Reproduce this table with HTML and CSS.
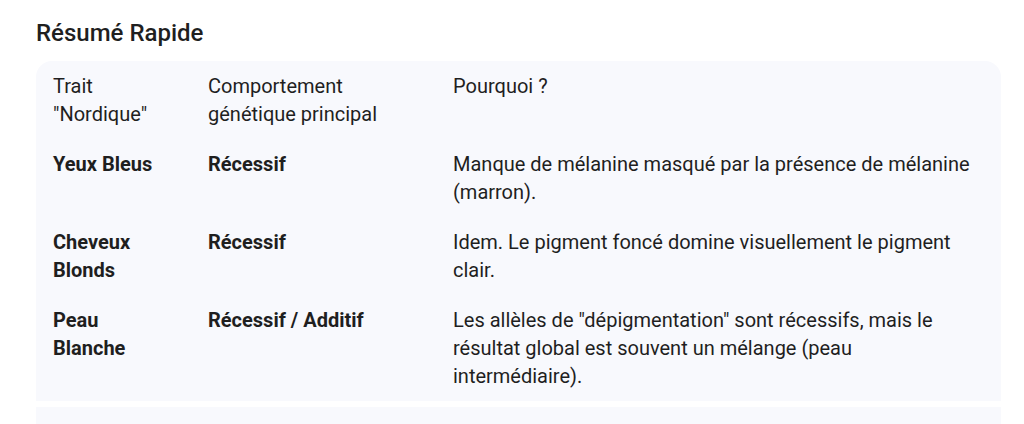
FILE: index.html
```html
<!DOCTYPE html>
<html lang="fr">
<head>
<meta charset="utf-8">
<link rel="stylesheet" href="styles.css">
</head>
<body>
<main class="page">
  <h2 class="title">Résumé Rapide</h2>
  <div class="card">
    <table class="table">
      <thead>
        <tr>
          <th class="c1">Trait "Nordique"</th>
          <th class="c2">Comportement génétique principal</th>
          <th class="c3">Pourquoi ?</th>
        </tr>
      </thead>
      <tbody>
        <tr>
          <td><strong>Yeux Bleus</strong></td>
          <td><strong>Récessif</strong></td>
          <td>Manque de mélanine masqué par la présence de mélanine (marron).</td>
        </tr>
        <tr>
          <td><strong>Cheveux Blonds</strong></td>
          <td><strong>Récessif</strong></td>
          <td>Idem. Le pigment foncé domine visuellement le pigment clair.</td>
        </tr>
        <tr>
          <td><strong>Peau Blanche</strong></td>
          <td><strong>Récessif / Additif</strong></td>
          <td>Les allèles de "dépigmentation" sont récessifs, mais le résultat global est souvent un mélange (peau intermédiaire).</td>
        </tr>
      </tbody>
    </table>
  </div>
  <div class="card next"></div>
</main>
</body>
</html>
```
FILE: styles.css
```css
html, body {
  margin: 0;
  padding: 0;
  background: #ffffff;
}
body {
  font-family: Roboto, "Noto Sans", sans-serif;
  color: #1f1f1f;
  overflow: hidden;
  height: 424px;
}
.page {
  padding: 0 23px 0 36px;
}
.title {
  margin: 0;
  padding-top: 17px;
  font-size: 24px;
  line-height: 32px;
  font-weight: 500;
  color: #1f1f1f;
}
.card {
  margin-top: 12px;
  background: #f8f9fd;
  border-radius: 16px 16px 0 0;
  padding: 11px 16px 11px 17px;
}
.card.next {
  margin-top: 6px;
  height: 30px;
  border-radius: 0;
  padding: 0;
}
.table {
  border-collapse: collapse;
  width: 100%;
  table-layout: fixed;
  font-size: 20px;
  line-height: 28px;
}
th, td {
  text-align: left;
  vertical-align: top;
  padding: 0;
}
th {
  font-weight: 400;
  padding-bottom: 11px;
}
tbody td {
  padding-top: 11px;
  padding-bottom: 11px;
}
tbody tr:last-child td {
  padding-bottom: 0;
}
td strong {
  font-weight: 700;
}
th:nth-child(1), td:nth-child(1) { padding-right: 40px; }
th:nth-child(2), td:nth-child(2) { padding-right: 40px; }
.c1 { width: 115px; }
.c2 { width: 205px; }
```
